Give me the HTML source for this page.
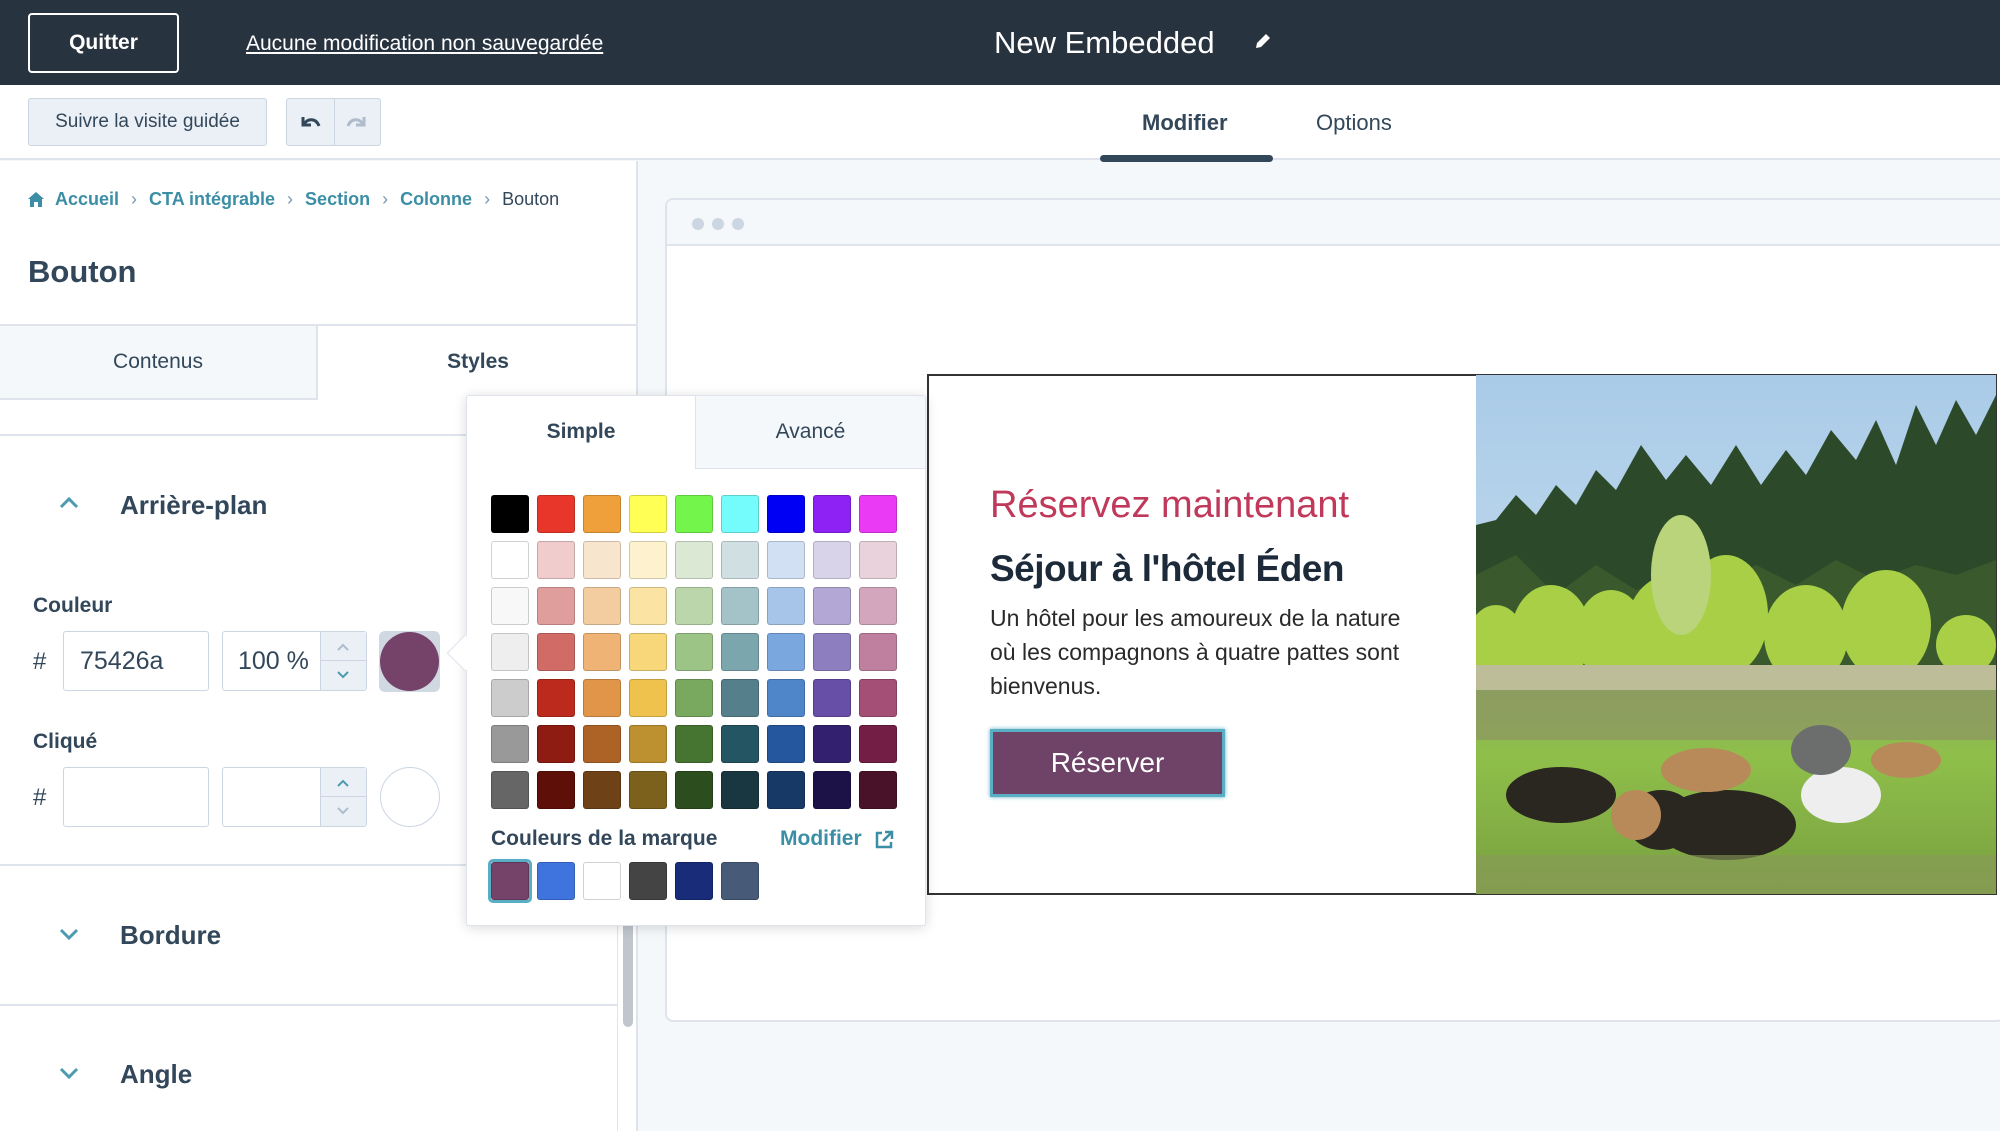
<!DOCTYPE html>
<html><head><meta charset="utf-8">
<style>
*{box-sizing:border-box;margin:0;padding:0}
body{width:2000px;height:1131px;overflow:hidden;position:relative;font-family:"Liberation Sans",sans-serif;background:#f5f8fa;color:#33475b}
.a{position:absolute}
.top{left:0;top:0;width:2000px;height:85px;background:#283340}
.sw{position:absolute;width:38px;height:38px;border-radius:3px;border:1px solid rgba(0,0,0,.18)}
.hd{font-weight:bold;font-size:26px;color:#33475b}
</style></head><body>
<div class="a top"></div>
<div class="a" style="left:28px;top:13px;width:151px;height:60px;border:2px solid #fff;border-radius:4px;color:#fff;font-weight:bold;font-size:21px;text-align:center;line-height:56px">Quitter</div>
<div class="a" style="left:246px;top:32px;color:#fff;font-size:21px;text-decoration:underline">Aucune modification non sauvegardée</div>
<div class="a" style="left:994px;top:25px;color:#fff;font-size:31px">New Embedded</div>
<svg class="a" style="left:1253px;top:31px" width="20" height="20" viewBox="0 0 20 20"><path d="M3 17l1-5L13 3l4 4-9 9z" fill="#fff"/></svg>
<div class="a" style="left:0;top:85px;width:2000px;height:75px;background:#fff;border-bottom:2px solid #dfe3eb"></div>
<div class="a" style="left:28px;top:98px;width:239px;height:48px;background:#eaf0f6;border:1px solid #cbd6e2;border-radius:3px;font-size:19px;color:#33475b;text-align:center;line-height:46px">Suivre la visite guidée</div>
<div class="a" style="left:286px;top:98px;width:95px;height:48px;background:#eaf0f6;border:1px solid #cbd6e2;border-radius:3px"></div>
<div class="a" style="left:334px;top:98px;width:1px;height:48px;background:#cbd6e2"></div>
<svg class="a" style="left:297px;top:112px" width="26" height="22" viewBox="0 0 26 22"><path d="M6 5v8h8" fill="none" stroke="#33475b" stroke-width="3"/><path d="M7 12c4-6 12-6 15 2" fill="none" stroke="#33475b" stroke-width="3"/></svg>
<svg class="a" style="left:344px;top:112px" width="26" height="22" viewBox="0 0 26 22"><path d="M20 5v8h-8" fill="none" stroke="#b0bccb" stroke-width="3"/><path d="M19 12c-4-6-12-6-15 2" fill="none" stroke="#b0bccb" stroke-width="3"/></svg>
<div class="a" style="left:1142px;top:110px;font-size:22px;font-weight:bold;color:#33475b">Modifier</div>
<div class="a" style="left:1100px;top:155px;width:173px;height:7px;background:#33475b;border-radius:4px"></div>
<div class="a" style="left:1316px;top:110px;font-size:22px;color:#33475b">Options</div>
<div class="a" style="left:0;top:161px;width:638px;height:970px;background:#fff;border-right:2px solid #dfe3eb"></div>
<svg class="a" style="left:28px;top:192px" width="16" height="15" viewBox="0 0 16 15"><path d="M8 0L0 7h2v8h4v-5h4v5h4V7h2z" fill="#3b8ea5"/></svg>
<div class="a" style="left:55px;top:189px;font-size:18px;font-weight:bold;color:#3b8ea5;white-space:nowrap">Accueil <span style="color:#7c98b6;font-weight:normal;margin:0 7px">›</span> CTA intégrable <span style="color:#7c98b6;font-weight:normal;margin:0 7px">›</span> Section <span style="color:#7c98b6;font-weight:normal;margin:0 7px">›</span> Colonne <span style="color:#7c98b6;font-weight:normal;margin:0 7px">›</span> <span style="color:#33475b;font-weight:normal">Bouton</span></div>
<div class="a" style="left:28px;top:254px;font-size:31px;font-weight:bold;color:#33475b">Bouton</div>
<div class="a" style="left:0;top:324px;width:638px;height:2px;background:#dfe3eb"></div>
<div class="a" style="left:0;top:326px;width:318px;height:74px;background:#f5f8fa;border-right:2px solid #dfe3eb;border-bottom:2px solid #dfe3eb;font-size:21px;text-align:center;line-height:72px">Contenus</div>
<div class="a" style="left:318px;top:326px;width:320px;height:74px;font-size:21px;font-weight:bold;text-align:center;line-height:72px">Styles</div>
<div class="a" style="left:0;top:434px;width:618px;height:2px;background:#dfe3eb"></div>
<svg class="a" style="left:58px;top:496px" width="22" height="14" viewBox="0 0 22 14"><path d="M3 11l8-8 8 8" fill="none" stroke="#4c9bb0" stroke-width="3"/></svg>
<div class="a hd" style="left:120px;top:490px">Arrière-plan</div>
<div class="a" style="left:33px;top:594px;font-size:21px;font-weight:bold">Couleur</div>
<div class="a" style="left:33px;top:648px;font-size:24px">#</div>
<div class="a" style="left:63px;top:631px;width:146px;height:60px;border:1px solid #cbd6e2;border-radius:3px;font-size:25px;padding-left:16px;line-height:58px">75426a</div>
<div class="a" style="left:222px;top:631px;width:145px;height:60px;border:1px solid #cbd6e2;border-radius:3px;font-size:25px;padding-left:15px;line-height:58px;overflow:hidden">100 %</div>
<div class="a" style="left:320px;top:632px;width:46px;height:58px;background:#eaf0f6;border-left:1px solid #cbd6e2"></div>
<div class="a" style="left:320px;top:660px;width:46px;height:1px;background:#cbd6e2"></div>
<svg class="a" style="left:335px;top:641px" width="16" height="40" viewBox="0 0 16 40"><path d="M3 9l5-5 5 5" fill="none" stroke="#b0bccb" stroke-width="2"/><path d="M3 31l5 5 5-5" fill="none" stroke="#4c9bb0" stroke-width="2"/></svg>
<div class="a" style="left:379px;top:631px;width:61px;height:61px;background:#d0d8e2;border-radius:6px"></div>
<div class="a" style="left:380px;top:632px;width:59px;height:59px;background:#75426a;border-radius:50%"></div>
<div class="a" style="left:33px;top:730px;font-size:21px;font-weight:bold">Cliqué</div>
<div class="a" style="left:33px;top:784px;font-size:24px">#</div>
<div class="a" style="left:63px;top:767px;width:146px;height:60px;border:1px solid #cbd6e2;border-radius:3px"></div>
<div class="a" style="left:222px;top:767px;width:145px;height:60px;border:1px solid #cbd6e2;border-radius:3px"></div>
<div class="a" style="left:320px;top:768px;width:46px;height:58px;background:#eaf0f6;border-left:1px solid #cbd6e2"></div>
<div class="a" style="left:320px;top:796px;width:46px;height:1px;background:#cbd6e2"></div>
<svg class="a" style="left:335px;top:777px" width="16" height="40" viewBox="0 0 16 40"><path d="M3 9l5-5 5 5" fill="none" stroke="#4c9bb0" stroke-width="2"/><path d="M3 31l5 5 5-5" fill="none" stroke="#b0bccb" stroke-width="2"/></svg>
<div class="a" style="left:380px;top:767px;width:60px;height:60px;border:1px solid #cbd6e2;border-radius:50%"></div>
<div class="a" style="left:0;top:864px;width:618px;height:2px;background:#dfe3eb"></div>
<svg class="a" style="left:58px;top:927px" width="22" height="14" viewBox="0 0 22 14"><path d="M3 3l8 8 8-8" fill="none" stroke="#4c9bb0" stroke-width="3"/></svg>
<div class="a hd" style="left:120px;top:920px">Bordure</div>
<div class="a" style="left:0;top:1004px;width:618px;height:2px;background:#dfe3eb"></div>
<svg class="a" style="left:58px;top:1066px" width="22" height="14" viewBox="0 0 22 14"><path d="M3 3l8 8 8-8" fill="none" stroke="#4c9bb0" stroke-width="3"/></svg>
<div class="a hd" style="left:120px;top:1059px">Angle</div>
<div class="a" style="left:617px;top:436px;width:1px;height:695px;background:#dfe3eb"></div>
<div class="a" style="left:623px;top:920px;width:10px;height:107px;background:#c0c6cc;border-radius:5px"></div>
<div class="a" style="left:665px;top:198px;width:1340px;height:824px;background:#fff;border:2px solid #dfe3eb;border-radius:8px"></div>
<div class="a" style="left:667px;top:200px;width:1335px;height:46px;background:#f5f8fa;border-bottom:2px solid #dfe3eb;border-radius:6px 0 0 0"></div>
<div class="a" style="left:692px;top:218px;width:12px;height:12px;border-radius:50%;background:#cbd6e2;box-shadow:20px 0 #cbd6e2,40px 0 #cbd6e2"></div>
<div class="a" style="left:927px;top:374px;width:1070px;height:521px;background:#fff;border:2px solid #333"></div>
<div class="a" style="left:990px;top:484px;font-size:38px;color:#c0395a;white-space:nowrap">Réservez maintenant</div>
<div class="a" style="left:990px;top:548px;font-size:37px;font-weight:bold;color:#1c2a3a;white-space:nowrap;letter-spacing:-0.5px">Séjour à l'hôtel Éden</div>
<div class="a" style="left:990px;top:601px;font-size:23px;line-height:34px;color:#2a2a2a;width:440px">Un hôtel pour les amoureux de la nature où les compagnons à quatre pattes sont bienvenus.</div>
<div class="a" style="left:990px;top:729px;width:235px;height:68px;background:#6f4267;border:3px solid #5aaec4;box-shadow:0 0 4px #5aaec4;color:#fff;font-size:28px;text-align:center;line-height:62px">Réserver</div>
<svg class="a" style="left:1476px;top:375px" width="520" height="519" viewBox="0 0 520 519">
<defs><linearGradient id="sky" x1="0" y1="0" x2="0" y2="1"><stop offset="0" stop-color="#a9cbe8"/><stop offset="1" stop-color="#d8e6ef"/></linearGradient>
<linearGradient id="gr" x1="0" y1="0" x2="0" y2="1"><stop offset="0" stop-color="#8aa861"/><stop offset=".4" stop-color="#8fbf4a"/><stop offset="1" stop-color="#78a040"/></linearGradient></defs>
<rect width="520" height="519" fill="url(#sky)"/>
<path d="M0 150 L20 145 L40 120 L60 140 L80 110 L100 130 L120 95 L140 115 L165 70 L190 105 L210 80 L235 110 L260 70 L285 110 L310 75 L330 100 L355 55 L380 85 L400 45 L420 90 L440 30 L460 70 L480 25 L500 60 L520 20 L520 300 L0 300Z" fill="#2c4a2a"/>
<path d="M0 200 L40 180 L80 220 L120 190 L160 215 L200 200 L240 210 L280 190 L320 210 L360 185 L400 205 L440 190 L480 200 L520 185 L520 300 L0 300Z" fill="#3a5a2e"/>
<g fill="#a8cf45"><ellipse cx="20" cy="270" rx="30" ry="40"/><ellipse cx="75" cy="260" rx="40" ry="50"/><ellipse cx="135" cy="260" rx="35" ry="45"/><ellipse cx="195" cy="255" rx="45" ry="55"/><ellipse cx="250" cy="240" rx="42" ry="60"/><ellipse cx="330" cy="260" rx="42" ry="50"/><ellipse cx="410" cy="250" rx="45" ry="55"/><ellipse cx="490" cy="270" rx="30" ry="30"/></g>
<ellipse cx="205" cy="200" rx="30" ry="60" fill="#b9d47a"/>
<rect y="290" width="520" height="229" fill="url(#gr)"/>
<rect y="290" width="520" height="25" fill="#c9c2a8" opacity=".8"/>
<rect y="315" width="520" height="50" fill="#8d9662" opacity=".7"/>
<g fill="#2a2620"><ellipse cx="85" cy="420" rx="55" ry="28"/><ellipse cx="250" cy="450" rx="70" ry="35"/><ellipse cx="185" cy="445" rx="35" ry="30"/></g>
<g fill="#b88a5a"><ellipse cx="230" cy="395" rx="45" ry="22"/><ellipse cx="160" cy="440" rx="25" ry="25"/><ellipse cx="430" cy="385" rx="35" ry="18"/></g>
<ellipse cx="365" cy="420" rx="40" ry="28" fill="#eeeeee"/>
<ellipse cx="345" cy="375" rx="30" ry="25" fill="#6b6e6c"/>
<rect y="480" width="520" height="39" fill="#8a9a5a" opacity=".6"/>
</svg>
<div class="a" style="left:466px;top:395px;width:460px;height:531px;background:#fff;border:1px solid #dfe3eb;border-radius:3px;box-shadow:0 2px 12px rgba(0,0,0,.15)"></div>
<div class="a" style="left:452px;top:640px;width:26px;height:26px;background:#fff;transform:rotate(45deg);border-left:1px solid #dfe3eb;border-bottom:1px solid #dfe3eb"></div>
<div class="a" style="left:695px;top:396px;width:230px;height:73px;background:#f5f8fa;border-left:1px solid #dfe3eb;border-bottom:1px solid #dfe3eb;font-size:21px;text-align:center;line-height:72px">Avancé</div>
<div class="a" style="left:467px;top:396px;width:228px;height:73px;font-size:21px;font-weight:bold;text-align:center;line-height:72px">Simple</div>
<div id="g"></div>
<div class="a" style="left:491px;top:827px;font-size:21px;font-weight:bold;color:#33475b">Couleurs de la marque</div>
<div class="a" style="left:780px;top:827px;font-size:21px;font-weight:bold;color:#3b8ea5">Modifier</div>
<svg class="a" style="left:874px;top:830px" width="20" height="20" viewBox="0 0 20 20"><path d="M8 3H3v14h14v-5" fill="none" stroke="#3b8ea5" stroke-width="2.5"/><path d="M11 2h7v7M18 2l-9 9" fill="none" stroke="#3b8ea5" stroke-width="2.5"/></svg>
<div class="a" style="left:488px;top:859px;width:44px;height:44px;border:3px solid #5aaec4;border-radius:5px"></div>
<script>
var rows=[["#000","#e8372a","#f0a03a","#ffff55","#73f54c","#74fbfb","#0000f5","#8e22f5","#ea3af5"],
["#fff","#f0cccc","#f8e5cd","#fdf2cd","#dbe8d4","#d0e0e2","#d1e0f2","#d9d3e9","#ead2dc"],
["#f8f8f8","#df9e9b","#f3cd9f","#fbe3a3","#bad6aa","#a3c3c8","#a6c5e8","#b3a7d5","#d4a6bd"],
["#eee","#d06b66","#efb375","#f8d77a","#9bc486","#7ca6ae","#7aa7de","#8d7ec0","#bf7f9f"],
["#ccc","#bb2a1d","#e09548","#eec24d","#79a85f","#557f8b","#4f86c9","#674ea7","#a44f75"],
["#999","#8e1c12","#ad6325","#bd912f","#457531","#245562","#25579e","#33206f","#721e45"],
["#666","#5d0f08","#6f4117","#7b611b","#2c4d1d","#193741","#173966","#1c1247","#4a1229"]];
var h="";rows.forEach(function(r,i){r.forEach(function(c,j){h+='<div class="sw" style="left:'+(491+j*46)+'px;top:'+(495+i*46)+'px;background:'+c+'"></div>'})});
["#75426a","#3f73dd","#fff","#444","#182c7a","#475a78"].forEach(function(c,j){h+='<div class="sw" style="left:'+(491+j*46)+'px;top:862px;background:'+c+'"></div>'});
document.getElementById("g").innerHTML=h;
</script>
</body></html>
